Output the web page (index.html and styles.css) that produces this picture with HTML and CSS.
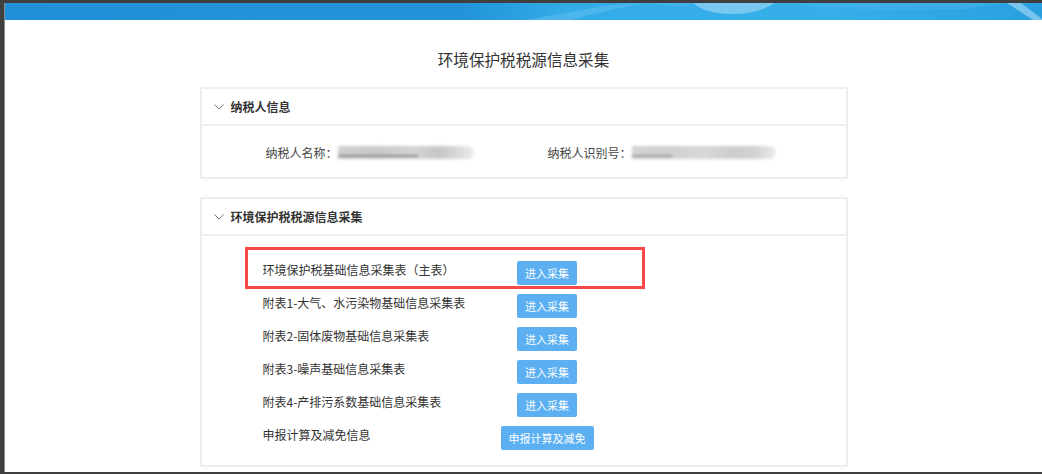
FILE: index.html
```html
<!DOCTYPE html>
<html lang="zh-CN">
<head>
<meta charset="utf-8">
<title>环境保护税税源信息采集</title>
<link rel="stylesheet" href="styles.css">
</head>
<body>
<div class="window">
  <div class="banner">
    <svg class="banner-art" viewBox="0 0 1037 17" preserveAspectRatio="none" width="1037" height="17">
      <defs>
        <linearGradient id="bg" x1="0" y1="0" x2="1" y2="0">
          <stop offset="0" stop-color="#2190d8"/>
          <stop offset="0.44" stop-color="#2293d9"/>
          <stop offset="0.54" stop-color="#33abe7"/>
          <stop offset="0.8" stop-color="#36afe9"/>
          <stop offset="1" stop-color="#2a9fe0"/>
        </linearGradient>
      </defs>
      <rect x="0" y="0" width="1037" height="17" fill="url(#bg)"/>
      <path d="M520 17 Q565 9 605 2 L640 0 Q600 8 565 17 Z" fill="#5fbef0" opacity="0.55"/>
      <path d="M640 0 Q660 4 680 3 L690 0 Z" fill="#4db6ec" opacity="0.6"/>
      <path d="M688 0 Q700 11 728 11 Q752 11 770 0 Z" fill="#78c8f1"/>
      <path d="M780 0 Q850 10 960 6 L1000 0 Z" fill="#45b4ec" opacity="0.5"/>
      <path d="M1002 0 L1016 0 L1037 16 L1037 17 L1028 17 Z" fill="#9ad6f5" opacity="0.7"/>
    </svg>
  </div>
  <main class="main">
    <h1 class="title">环境保护税税源信息采集</h1>

    <section class="panel">
      <div class="panel-head">
        <svg class="chev" width="10" height="6" viewBox="0 0 10 6"><polyline points="0.5,0.5 5,5 9.5,0.5" fill="none" stroke="#777" stroke-width="1"/></svg>
        <span>纳税人信息</span>
      </div>
      <div class="panel-body info">
        <div class="field"><span>纳税人名称：</span><span class="mask mask-a"></span></div>
        <div class="field"><span>纳税人识别号：</span><span class="mask mask-b"></span></div>
      </div>
    </section>

    <section class="panel panel-2">
      <div class="panel-head">
        <svg class="chev" width="10" height="6" viewBox="0 0 10 6"><polyline points="0.5,0.5 5,5 9.5,0.5" fill="none" stroke="#777" stroke-width="1"/></svg>
        <span>环境保护税税源信息采集</span>
      </div>
      <div class="panel-body list">
        <div class="row marked">
          <span class="label">环境保护税基础信息采集表（主表）</span>
          <div class="action"><button class="btn">进入采集</button></div>
          <div class="highlight"></div>
        </div>
        <div class="row">
          <span class="label">附表1-大气、水污染物基础信息采集表</span>
          <div class="action"><button class="btn">进入采集</button></div>
        </div>
        <div class="row">
          <span class="label">附表2-固体废物基础信息采集表</span>
          <div class="action"><button class="btn">进入采集</button></div>
        </div>
        <div class="row">
          <span class="label">附表3-噪声基础信息采集表</span>
          <div class="action"><button class="btn">进入采集</button></div>
        </div>
        <div class="row">
          <span class="label">附表4-产排污系数基础信息采集表</span>
          <div class="action"><button class="btn">进入采集</button></div>
        </div>
        <div class="row">
          <span class="label">申报计算及减免信息</span>
          <div class="action"><button class="btn">申报计算及减免</button></div>
        </div>
      </div>
    </section>
  </main>
</div>
</body>
</html>
```

FILE: styles.css
```css
html, body {
  margin: 0;
  padding: 0;
}
body {
  background: #3f3f3f;
  width: 1042px;
  height: 474px;
  overflow: hidden;
  font-family: "Noto Sans CJK SC", "Noto Sans", "Liberation Sans", sans-serif;
  color: #333;
}
.window {
  margin: 3px 0 0 4px;
  border-left: 1px solid #8c8c8c;
  height: 469px;
  background: #fff;
  display: flex;
  flex-direction: column;
}
.banner {
  height: 17px;
  overflow: hidden;
  background: #2190d8;
  flex: none;
}
.banner-art {
  display: block;
}
.main {
  flex: 1;
  display: flex;
  flex-direction: column;
  align-items: center;
}
.title {
  margin: 28px 0 17px;
  font-size: 15.6px;
  line-height: 22px;
  font-weight: normal;
  color: #333;
}
.panel {
  width: 648px;
  box-sizing: border-box;
  border: 2px solid #eeeeee;
  background: #fff;
}
.panel-2 {
  margin-top: 18px;
}
.panel-head {
  height: 35px;
  border-bottom: 2px solid #f0f0f0;
  display: flex;
  align-items: center;
  padding-left: 12px;
  gap: 7px;
  font-size: 12px;
  font-weight: bold;
  color: #333;
}
.chev {
  display: block;
  flex: none;
}
.panel-body {
  font-size: 12px;
  line-height: 17px;
}
.info {
  display: flex;
  padding: 18px 0 16px 64px;
  gap: 74px;
  color: #444;
}
.field {
  display: flex;
  align-items: center;
}
.mask {
  display: inline-block;
  height: 13px;
  filter: blur(1.4px);
  border-radius: 0 7px 7px 0;
}
.mask-a {
  width: 136px;
  background:
    linear-gradient(#0000 0 9px, #8a8a8a 9px 11px, #0000 11px) 0 0 / 80px 13px no-repeat,
    linear-gradient(90deg, #cfcfcf 0, #c9c9c9 30%, #d4d4d4 55%, #c6c6c6 75%, #dcdcdc 90%, #ececec 100%);
}
.mask-b {
  width: 144px;
  background:
    linear-gradient(#0000 0 9px, #9a9a9a 9px 11px, #0000 11px) 0 0 / 40px 13px no-repeat,
    linear-gradient(90deg, #d4d4d4 0, #cfcfcf 25%, #d8d8d8 50%, #cccccc 70%, #d2d2d2 85%, #ebebeb 100%);
}
.list {
  padding: 25px 0 15px 61px;
  display: flex;
  flex-direction: column;
  gap: 9px;
}
.row {
  display: flex;
  align-items: flex-start;
  position: relative;
}
.label {
  width: 238px;
  flex: none;
  color: #333;
  white-space: nowrap;
}
.action {
  width: 93px;
  display: flex;
  justify-content: center;
}
.btn {
  height: 24px;
  padding: 0 8px;
  border: none;
  border-radius: 2px;
  background: #5cb0f2;
  color: #fff;
  font-family: inherit;
  font-size: 11px;
  line-height: 24px;
  white-space: nowrap;
}
.highlight {
  position: absolute;
  left: -18px;
  top: -14px;
  width: 400px;
  height: 42px;
  box-sizing: border-box;
  border: 3px solid #f54848;
  pointer-events: none;
}
```
